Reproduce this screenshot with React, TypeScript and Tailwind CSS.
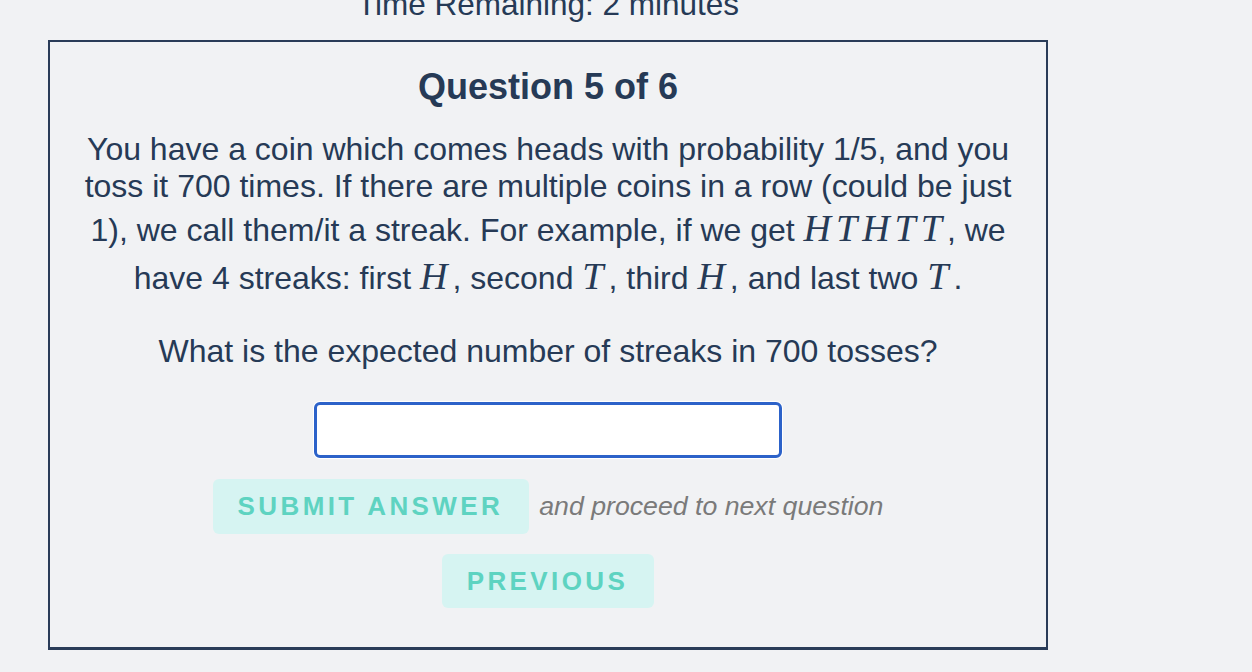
import React from "react"

function M({ children }: { children: React.ReactNode }) {
  return (
    <span className="inline-block pb-[2px] font-['Liberation_Serif',serif] italic text-[38px] leading-[46px] tracking-[5px]">
      {children}
    </span>
  )
}

export default function App() {
  return (
    <div className="min-h-screen w-full overflow-hidden bg-[#f1f2f4] font-['Liberation_Sans',Arial,sans-serif] text-[#263a56]">
      <div className="ml-[48px] w-[1000px]">
        {/* Timer */}
        <div className="-mt-[12px] mb-[20px] h-[32px] text-center text-[31.5px] leading-[32px]">
          Time Remaining: 2 minutes
        </div>

        {/* Question card */}
        <div className="flex h-[610px] flex-col items-center border-2 border-b-[3px] border-[#2a3c58] pt-[23px]">
          <h1 className="text-[36px] font-bold leading-[43px]">Question 5 of 6</h1>

          <p className="mt-[23px] w-[950px] text-center text-[32px] leading-[37px]">
            You have a coin which comes heads with probability 1/5, and you toss it 700 times. If there are multiple
            coins in a row (could be just 1), we call them/it a streak. For example, if we get <M>HTHTT</M>, we have 4
            streaks: first <M>H</M>, second <M>T</M>, third <M>H</M>, and last two <M>T</M>.
          </p>

          <p className="mt-[32px] text-center text-[32px] leading-[37px]">
            What is the expected number of streaks in 700 tosses?
          </p>

          <input
            type="text"
            className="mt-[32px] h-[56px] w-[468px] rounded-[6px] border-[3px] border-[#2c62c9] bg-white px-3 text-[26px] outline-none ring-1 ring-white"
          />

          <div className="mt-[21px] flex items-center gap-[10px]">
            <button className="flex h-[55px] items-center rounded-[6px] bg-[#d6f4f2] pl-[25px] pr-[26px] text-[26px] font-bold tracking-[3.4px] text-[#5ed3c1]">
              SUBMIT ANSWER
            </button>
            <span className="text-[26.7px] italic text-[#7a7a7a]">and proceed to next question</span>
          </div>

          <button className="mt-[20px] flex h-[54px] items-center rounded-[6px] bg-[#d6f4f2] pl-[25px] pr-[26px] text-[26px] font-bold tracking-[3.4px] text-[#5ed3c1]">
            PREVIOUS
          </button>
        </div>
      </div>
    </div>
  )
}
